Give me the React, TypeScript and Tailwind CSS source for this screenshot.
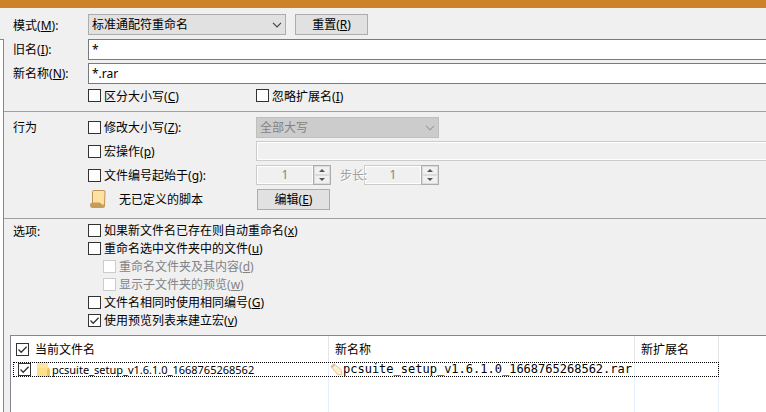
import { useState, type ReactNode } from 'react'

function Key({ k }: { k: string }) {
  return (
    <>
      (<u>{k}</u>)
    </>
  )
}

function Box({ id, defaultChecked, disabled, label }: { id?: string; defaultChecked?: boolean; disabled?: boolean; label?: string }) {
  const [on, setOn] = useState(!!defaultChecked)
  return (
    <span className="relative block size-[13px] shrink-0">
      <input
        id={id}
        aria-label={label}
        type="checkbox"
        checked={on}
        disabled={disabled}
        onChange={(e) => setOn(e.target.checked)}
        className="block size-[13px] appearance-none border border-[#333] bg-white disabled:border-[#ccc]"
      />
      {on && (
        <svg viewBox="0 0 13 13" className="pointer-events-none absolute inset-0 size-[13px]" fill="none" stroke="#333" strokeWidth="1.3">
          <path d="M2.5 6.5 L5.2 9.3 L10.6 3.7" />
        </svg>
      )}
    </span>
  )
}

function Check({ id, children, checked, disabled }: { id: string; children: ReactNode; checked?: boolean; disabled?: boolean }) {
  return (
    <div className="flex items-center gap-[3px]">
      <Box id={id} defaultChecked={checked} disabled={disabled} />
      <label htmlFor={id} className={disabled ? 'pt-[2px] leading-[16px] text-[#838383]' : 'pt-[2px] leading-[16px] text-black'}>
        {children}
      </label>
    </div>
  )
}

function Chevron({ color }: { color: string }) {
  return (
    <svg viewBox="0 0 10 6" className="pointer-events-none absolute top-2 right-1 h-[6px] w-[10px]" fill="none" stroke={color} strokeWidth="1.2">
      <path d="M1 0.8 L5 4.8 L9 0.8" />
    </svg>
  )
}

function Spin({ id, label }: { id: string; label: string }) {
  return (
    <div className="flex h-5 w-[75px] border border-[#ccc] bg-[#f0f0f0]">
      <input
        id={id}
        aria-label={label}
        disabled
        defaultValue="1"
        inputMode="numeric"
        className="w-[56px] min-w-0 border border-white bg-[#f0f0f0] text-center text-[#838383]"
      />
      <div className="-my-px -mr-px flex w-[18px] flex-col border border-[#acacac] bg-[#d9d9d9]">
        <button type="button" disabled aria-label={label + ' +'} className="flex flex-1 items-center justify-center border border-[#dcdcdc] bg-[#f0f0f0]">
          <svg viewBox="0 0 6 3" className="h-[3px] w-[6px]" fill="#555">
            <path d="M0 3 L3 0 L6 3Z" />
          </svg>
        </button>
        <button type="button" disabled aria-label={label + ' -'} className="flex flex-1 items-center justify-center border border-[#dcdcdc] bg-[#f0f0f0]">
          <svg viewBox="0 0 6 3" className="h-[3px] w-[6px]" fill="#555">
            <path d="M0 0 L3 3 L6 0Z" />
          </svg>
        </button>
      </div>
    </div>
  )
}

const btn = 'h-[21px] w-[73px] border border-[#adadad] bg-[#e1e1e1] pt-px text-center'
const field = 'h-[21px] min-w-0 flex-1 border border-r-0 border-[#7a7a7a] bg-white px-[3px]'

export default function App() {
  return (
    <div className="flex min-h-screen flex-col overflow-hidden bg-[#f0f0f0] font-['Noto_Sans','Noto_Sans_CJK_SC',sans-serif] text-[12px] leading-[16px] text-black">
      <div className="h-2 bg-[#cd8128]" />
      <div className="flex flex-1">
        <div className="flex w-1 shrink-0 pt-[31px]">
          <div className="flex-1 border-t border-r border-[#828790] bg-white" />
        </div>
        <main className="flex min-w-0 flex-1 flex-col">
          <section className="pt-[6px] pb-1">
            <div className="flex h-[21px] items-center pl-[9px]">
              <label htmlFor="mode" className="w-[75px] pt-[2px]">
                模式<Key k="M" />:
              </label>
              <div className="relative w-[198px]">
                <select id="mode" className="block h-[21px] w-full appearance-none border border-[#adadad] bg-[#e1e1e1] px-[3px] pt-px">
                  <option>标准通配符重命名</option>
                </select>
                <Chevron color="#444" />
              </div>
              <button type="button" className={btn + ' ml-[9px]'}>
                重置<Key k="R" />
              </button>
            </div>
            <div className="mt-1 flex items-center pl-[9px]">
              <label htmlFor="old" className="w-[75px] pt-px">
                旧名<Key k="I" />:
              </label>
              <input id="old" defaultValue="*" className={field} />
            </div>
            <div className="mt-[3px] flex items-center pl-[9px]">
              <label htmlFor="new" className="w-[75px] pt-px">
                新名称<Key k="N" />:
              </label>
              <input id="new" defaultValue="*.rar" className={field} />
            </div>
            <div className="flex h-[23px] items-center pl-[84px]">
              <div className="w-[168px]">
                <Check id="case">
                  区分大小写<Key k="C" />
                </Check>
              </div>
              <Check id="ext">
                忽略扩展名<Key k="I" />
              </Check>
            </div>
          </section>

          <section className="border-t border-[#a0a0a0] pt-[3px] pb-[7px]">
            <div className="flex h-6 items-center pl-[9px]">
              <h2 className="w-[75px] pt-[2px]">行为</h2>
              <div className="w-[168px]">
                <Check id="modcase">
                  修改大小写<Key k="Z" />:
                </Check>
              </div>
              <div className="relative w-[183px]">
                <select aria-label="修改大小写" disabled className="block h-[21px] w-full appearance-none border border-[#bfbfbf] bg-[#ccc] px-[3px] pt-px text-[#838383] opacity-100">
                  <option>全部大写</option>
                </select>
                <Chevron color="#a0a0a0" />
              </div>
            </div>
            <div className="flex h-6 items-center pl-[84px]">
              <div className="w-[168px]">
                <Check id="macro">
                  宏操作<Key k="p" />
                </Check>
              </div>
              <div className="flex h-5 flex-1 border border-r-0 border-[#ccc]">
                <input aria-label="宏操作" disabled className="w-full border border-r-0 border-white bg-[#f0f0f0]" />
              </div>
            </div>
            <div className="flex h-6 items-center pl-[84px]">
              <div className="w-[168px]">
                <Check id="number">
                  文件编号起始于<Key k="g" />:
                </Check>
              </div>
              <Spin id="start" label="文件编号起始于" />
              <label htmlFor="step" className="z-10 w-[33px] pt-[2px] pl-[9px] whitespace-nowrap text-[#a0a0a0] [text-shadow:1px_1px_#fff]">
                步长:
              </label>
              <Spin id="step" label="步长" />
            </div>
            <div className="flex h-6 items-center pl-[84px]">
              <div className="flex w-[169px] items-center">
                <svg viewBox="0 0 18 18" className="ml-px size-[18px]">
                  <path d="M3.5 1.5 Q3.5 0.5 5 0.5 H15 Q16.2 0.5 16 2 L15.5 15 H3.5Z" fill="#ffe2a1" stroke="#c09553" />
                  <path d="M1 15 Q1 12.5 4 12.5 H10 Q12 12.5 12.5 14.5 Q14 16.5 16 14.5 V16.5 Q15.5 18 13 18 H3.5 Q1 17.8 1 15Z" fill="#c59c5a" />
                </svg>
                <span className="ml-3 pt-[2px]">无已定义的脚本</span>
              </div>
              <button type="button" className={btn}>
                编辑<Key k="E" />
              </button>
            </div>
          </section>

          <section className="flex border-t border-[#a0a0a0] pt-[2px] pl-[9px]">
            <h2 className="w-[75px] pt-[2px] leading-[18px]">选项:</h2>
            <div className="grid flex-1 auto-rows-[18px] items-center">
              <Check id="auto">
                如果新文件名已存在则自动重命名<Key k="x" />
              </Check>
              <Check id="folder">
                重命名选中文件夹中的文件<Key k="u" />
              </Check>
              <div className="pl-[15px]">
                <Check id="content" disabled>
                  重命名文件夹及其内容<Key k="d" />
                </Check>
              </div>
              <div className="pl-[15px]">
                <Check id="sub" disabled>
                  显示子文件夹的预览<Key k="w" />
                </Check>
              </div>
              <Check id="same">
                文件名相同时使用相同编号<Key k="G" />
              </Check>
              <Check id="preview" checked>
                使用预览列表来建立宏<Key k="v" />
              </Check>
            </div>
          </section>

          <div className="mt-[6px] ml-[6px] flex-1 overflow-hidden border-t border-l border-[#828790] bg-white pl-[2px]">
            <table className="w-[706px] table-fixed border-separate border-spacing-0 text-left">
              <colgroup>
                <col className="w-[316px]" />
                <col className="w-[306px]" />
                <col className="w-[84px]" />
              </colgroup>
              <thead>
                <tr className="h-[26px]">
                  <th className="border-r border-[#e5e5e5] p-0 font-normal">
                    <div className="flex items-center gap-[6px] pl-[3px]">
                      <Box defaultChecked label="全选" />
                      <span className="pt-[2px]">当前文件名</span>
                    </div>
                  </th>
                  <th className="border-r border-[#e5e5e5] p-0 pt-[2px] pl-[6px] font-normal">新名称</th>
                  <th className="border-r border-[#e5e5e5] p-0 pt-[2px] pl-[6px] font-normal">新扩展名</th>
                </tr>
              </thead>
              <tbody>
                <tr className="h-[15px] leading-[15px] outline-1 -outline-offset-1 outline-black outline-dotted">
                  <td className="border-r border-[#e6effb] p-0">
                    <div className="flex h-[15px] items-center pl-[5px]">
                      <Box defaultChecked label="pcsuite_setup" />
                      <svg viewBox="0 0 14 15" className="ml-[6px] h-[15px] w-[14px]">
                        <path d="M0 0 H11 V15 H0Z" fill="#ffe08a" />
                        <path d="M0 0 H11 V6 H0Z" fill="#ffe7a3" />
                        <path d="M10 8 L11.5 5 L13 8 V15 H10Z" fill="#edc65a" />
                      </svg>
                      <span className="ml-px text-[11px]">pcsuite_setup_v1.6.1.0_1668765268562</span>
                    </div>
                  </td>
                  <td className="border-r border-[#e6effb] p-0">
                    <div className="flex h-[15px] items-center pl-px">
                      <svg viewBox="0 0 13 13" className="h-[13px] w-[13px]">
                        <path d="M1 3.5 L4 0.8 L11.5 7 L12 12 L7.5 11.5Z" fill="#ffefcf" stroke="#dfc49c" />
                        <path d="M0.5 3.5 L4 0.5 L5.5 2 L2 5.5Z" fill="#d3c4ac" />
                      </svg>
                      <span className="font-['DejaVu_Sans_Mono',monospace]">pcsuite_setup_v1.6.1.0_1668765268562.rar</span>
                    </div>
                  </td>
                  <td className="border-r border-[#e6effb] p-0" />
                </tr>
                <tr className="h-[35px]">
                  <td className="border-r border-[#e6effb] p-0" />
                  <td className="border-r border-[#e6effb] p-0" />
                  <td className="border-r border-[#e6effb] p-0" />
                </tr>
              </tbody>
            </table>
          </div>
        </main>
      </div>
    </div>
  )
}
